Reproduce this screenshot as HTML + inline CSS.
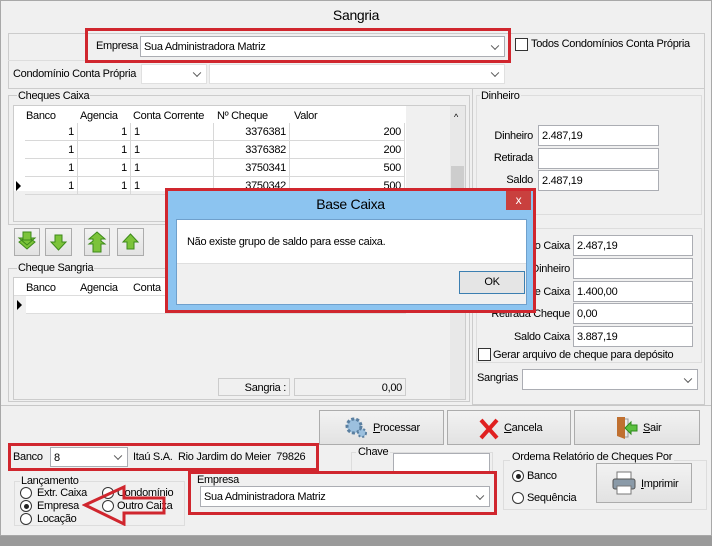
<!DOCTYPE html>
<html><head><meta charset="utf-8"><style>
*{box-sizing:border-box;margin:0;padding:0}
body{width:712px;height:546px;background:#9a9a9a;font-family:"Liberation Sans",sans-serif;font-size:11px;color:#000;position:relative;overflow:hidden;letter-spacing:-0.3px}
.a{position:absolute}
.win{left:0;top:0;width:712px;height:536px;background:#f0f0f0;border:1px solid #a8a8a8}
.inp{position:absolute;background:#fff;border:1px solid #abadb3;padding:4px 3px 0;white-space:nowrap}
.cmb::after{content:"";position:absolute;right:6px;top:50%;width:5px;height:5px;border-right:1.5px solid #555;border-bottom:1.5px solid #555;transform:translateY(-70%) rotate(45deg)}
.grp{position:absolute;border:1px solid #d5dfe5}
.lbl{position:absolute;white-space:nowrap}
.rl{position:absolute;white-space:nowrap;text-align:right;width:100px}
.red{position:absolute;border:3px solid #d0262e}
.btn{position:absolute;background:linear-gradient(#f2f2f2,#e2e2e2);border:1px solid #acacac}
.grid{position:absolute;background:#fff;border:1px solid #a0a0a0}
.cell{position:absolute;border-right:1px solid #d8d8d8;border-bottom:1px solid #d8d8d8;height:18px;padding:3px 3px 0;text-align:right}
.rad{position:absolute;width:12px;height:12px;border-radius:50%;border:1px solid #333;background:#fff}
.chk{position:absolute;width:13px;height:13px;border:1px solid #333;background:#fff}
u{text-decoration:underline}
</style></head><body>
<div class="a win"></div>
<div class="lbl" style="left:0;width:712px;text-align:center;top:7px;font-size:14px">Sangria</div>

<div class="grp" style="left:8px;top:33px;width:697px;height:56px;border-color:#ccc"></div>
<div class="a" style="left:8px;top:60px;width:497px;height:1px;background:#ddd"></div>
<div class="lbl" style="left:96px;top:40px">Empresa</div>
<div class="inp cmb" style="left:140px;top:36px;width:365px;height:21px">Sua Administradora Matriz</div>
<div class="red" style="left:85px;top:28px;width:426px;height:35px"></div>
<div class="chk" style="left:515px;top:38px"></div>
<div class="lbl" style="left:531px;top:38px">Todos Condomínios Conta Própria</div>
<div class="lbl" style="left:13px;top:68px">Condomínio Conta Própria</div>
<div class="inp cmb" style="left:141px;top:64px;width:66px;height:20px;border-color:#e0e0e0"></div>
<div class="inp cmb" style="left:209px;top:64px;width:296px;height:20px;border-color:#e0e0e0"></div>

<div class="grp" style="left:8px;top:95px;width:462px;height:130px;border-color:#ccc"></div>
<div class="lbl" style="left:17px;top:90px;background:#f0f0f0;padding:0 1px">Cheques Caixa</div>
<div class="grid" style="left:13px;top:105px;width:453px;height:117px;background:#f0f0f0;border-color:#ccc">
 <div class="a" style="left:0;top:0;width:392px;height:85px;background:#fff"></div>
 <div class="a" style="left:12px;top:4px">Banco</div>
 <div class="a" style="left:66px;top:4px">Agencia</div>
 <div class="a" style="left:119px;top:4px">Conta Corrente</div>
 <div class="a" style="left:203px;top:4px">Nº Cheque</div>
 <div class="a" style="left:280px;top:4px">Valor</div>
 <div class="a" style="left:436px;top:0;width:15px;height:115px;background:#e8e8e8"></div>
 <div class="a" style="left:437px;top:60px;width:13px;height:55px;background:#cdcdcd"></div>
 <div class="a" style="left:440px;top:6px;font-size:9px">^</div>
</div>
<div class="a" style="left:13px;top:123px">
 <div class="cell" style="left:12px;top:0;width:53px">1</div><div class="cell" style="left:65px;top:0;width:53px">1</div><div class="cell" style="left:118px;top:0;width:83px;text-align:left">1</div><div class="cell" style="left:201px;top:0;width:76px">3376381</div><div class="cell" style="left:277px;top:0;width:115px">200</div>
 <div class="cell" style="left:12px;top:18px;width:53px">1</div><div class="cell" style="left:65px;top:18px;width:53px">1</div><div class="cell" style="left:118px;top:18px;width:83px;text-align:left">1</div><div class="cell" style="left:201px;top:18px;width:76px">3376382</div><div class="cell" style="left:277px;top:18px;width:115px">200</div>
 <div class="cell" style="left:12px;top:36px;width:53px">1</div><div class="cell" style="left:65px;top:36px;width:53px">1</div><div class="cell" style="left:118px;top:36px;width:83px;text-align:left">1</div><div class="cell" style="left:201px;top:36px;width:76px">3750341</div><div class="cell" style="left:277px;top:36px;width:115px">500</div>
 <div class="cell" style="left:12px;top:54px;width:53px">1</div><div class="cell" style="left:65px;top:54px;width:53px">1</div><div class="cell" style="left:118px;top:54px;width:83px;text-align:left">1</div><div class="cell" style="left:201px;top:54px;width:76px">3750342</div><div class="cell" style="left:277px;top:54px;width:115px">500</div>
 <div class="a" style="left:3px;top:58px;width:0;height:0;border-left:5px solid #000;border-top:5px solid transparent;border-bottom:5px solid transparent"></div>
</div>

<div class="btn" style="left:14px;top:228px;width:26px;height:28px"><svg width="24" height="26"><path d="M8 3h8v6h4l-8 7-8-7h4z M8 11h8v-1l4 3-8 7-8-7 4-3z" fill="#7cc33a" stroke="#3d8a1a"/></svg></div>
<div class="btn" style="left:45px;top:228px;width:27px;height:28px"><svg width="25" height="26"><path d="M9 6h7v7h4l-7.5 8-7.5-8h4z" fill="#7cc33a" stroke="#3d8a1a"/></svg></div>
<div class="btn" style="left:84px;top:228px;width:26px;height:28px"><svg width="24" height="26"><path d="M12 3l8 7h-4v2l4 3h-4v8h-8v-8h-4l4-3v-2h-4z" fill="#7cc33a" stroke="#3d8a1a"/></svg></div>
<div class="btn" style="left:117px;top:228px;width:27px;height:28px"><svg width="25" height="26"><path d="M12.5 5l7.5 8h-4v7h-7v-7h-4z" fill="#7cc33a" stroke="#3d8a1a"/></svg></div>

<div class="grp" style="left:8px;top:268px;width:462px;height:134px;border-color:#ccc"></div>
<div class="lbl" style="left:17px;top:262px;background:#f0f0f0;padding:0 1px">Cheque Sangria</div>
<div class="grid" style="left:13px;top:277px;width:453px;height:123px;background:#f0f0f0;border-color:#ccc">
 <div class="a" style="left:0;top:0;width:392px;height:18px;background:#fff;border-bottom:1px solid #ddd"></div>
 <div class="a" style="left:12px;top:4px">Banco</div>
 <div class="a" style="left:66px;top:4px">Agencia</div>
 <div class="a" style="left:119px;top:4px">Conta</div>
 <div class="a" style="left:12px;top:18px;width:380px;height:18px;background:#fff;border-bottom:1px solid #ddd"></div>
 <div class="a" style="left:3px;top:22px;border-left:5px solid #000;border-top:5px solid transparent;border-bottom:5px solid transparent"></div>
 <div class="a" style="left:436px;top:0;width:15px;height:121px;background:#e8e8e8"></div>
 <div class="a" style="left:204px;top:100px;width:72px;height:18px;border:1px solid #ccc;text-align:right;padding:3px 3px 0">Sangria :</div>
 <div class="a" style="left:280px;top:100px;width:112px;height:18px;border:1px solid #ccc;text-align:right;padding:3px 3px 0">0,00</div>
</div>

<div class="grp" style="left:472px;top:88px;width:233px;height:317px;border-color:#ccc"></div>
<div class="grp" style="left:476px;top:95px;width:226px;height:120px;border-color:#ddd"></div>
<div class="lbl" style="left:480px;top:90px;background:#f0f0f0;padding:0 1px">Dinheiro</div>
<div class="rl" style="left:433px;top:130px">Dinheiro</div>
<div class="inp" style="left:538px;top:125px;width:121px;height:21px">2.487,19</div>
<div class="rl" style="left:433px;top:152px">Retirada</div>
<div class="inp" style="left:538px;top:148px;width:121px;height:21px"></div>
<div class="rl" style="left:433px;top:174px">Saldo</div>
<div class="inp" style="left:538px;top:170px;width:121px;height:21px">2.487,19</div>
<div class="grp" style="left:476px;top:228px;width:226px;height:135px;border-color:#ddd"></div>
<div class="rl" style="left:470px;top:240px">Saldo Caixa</div>
<div class="inp" style="left:573px;top:235px;width:120px;height:21px">2.487,19</div>
<div class="rl" style="left:470px;top:263px">Ret. Dinheiro</div>
<div class="inp" style="left:573px;top:258px;width:120px;height:21px"></div>
<div class="rl" style="left:470px;top:286px">Cheque Caixa</div>
<div class="inp" style="left:573px;top:281px;width:120px;height:21px">1.400,00</div>
<div class="rl" style="left:470px;top:308px">Retirada Cheque</div>
<div class="inp" style="left:573px;top:303px;width:120px;height:21px">0,00</div>
<div class="rl" style="left:470px;top:331px">Saldo Caixa</div>
<div class="inp" style="left:573px;top:326px;width:120px;height:21px">3.887,19</div>
<div class="chk" style="left:478px;top:348px"></div>
<div class="lbl" style="left:493px;top:349px">Gerar arquivo de cheque para depósito</div>
<div class="lbl" style="left:477px;top:372px">Sangrias</div>
<div class="inp cmb" style="left:522px;top:369px;width:176px;height:21px"></div>

<div class="a" style="left:1px;top:405px;width:710px;height:1px;background:#c8c8c8"></div>

<div class="btn" style="left:319px;top:410px;width:125px;height:35px"><svg class="a" style="left:24px;top:5px" width="26" height="24"><circle cx="10" cy="10" r="7" fill="#9cc0de" stroke="#5a7fa0" stroke-width="3" stroke-dasharray="3 2"/><circle cx="18" cy="17" r="4" fill="#9cc0de" stroke="#5a7fa0" stroke-width="2" stroke-dasharray="2 2"/></svg><span class="a" style="left:53px;top:11px"><u>P</u>rocessar</span></div>
<div class="btn" style="left:447px;top:410px;width:124px;height:35px"><svg class="a" style="left:30px;top:6px" width="22" height="24"><path d="M3 3L19 21M19 3L3 21" stroke="#e02020" stroke-width="4"/></svg><span class="a" style="left:56px;top:11px"><u>C</u>ancela</span></div>
<div class="btn" style="left:574px;top:410px;width:126px;height:35px"><svg class="a" style="left:38px;top:3px" width="26" height="28"><path d="M4 3h8v22l-8-3z" fill="#c07030"/><path d="M12 5h3v18h-3" fill="none" stroke="#999"/><path d="M12 14l6-6v3h6v6h-6v3z" fill="#5cc040" stroke="#2d8a1a"/></svg><span class="a" style="left:68px;top:11px"><u>S</u>air</span></div>

<div class="lbl" style="left:13px;top:451px">Banco</div>
<div class="inp cmb" style="left:50px;top:447px;width:78px;height:20px">8</div>
<div class="lbl" style="left:133px;top:451px">Itaú S.A.&nbsp; Rio Jardim do Meier&nbsp; 79826</div>
<div class="red" style="left:8px;top:443px;width:311px;height:28px"></div>

<div class="grp" style="left:351px;top:452px;width:142px;height:20px;border-color:#ddd;border-bottom:none"></div>
<div class="lbl" style="left:356px;top:446px;background:#f0f0f0;padding:0 2px">Chave</div>
<div class="inp" style="left:393px;top:453px;width:97px;height:20px"></div>

<div class="grp" style="left:14px;top:481px;width:171px;height:45px;border-color:#ddd"></div>
<div class="lbl" style="left:20px;top:475px;background:#f0f0f0;padding:0 1px">Lançamento</div>
<div class="rad" style="left:20px;top:487px"></div><div class="lbl" style="left:37px;top:487px">Extr. Caixa</div>
<div class="rad" style="left:20px;top:500px"></div><div class="a" style="left:24px;top:504px;width:5px;height:5px;border-radius:50%;background:#222"></div><div class="lbl" style="left:37px;top:500px">Empresa</div>
<div class="rad" style="left:20px;top:513px"></div><div class="lbl" style="left:37px;top:513px">Locação</div>
<div class="rad" style="left:102px;top:487px"></div><div class="lbl" style="left:117px;top:487px">Condomínio</div>
<div class="rad" style="left:102px;top:500px"></div><div class="lbl" style="left:117px;top:500px">Outro Caixa</div>
<svg class="a" style="left:82px;top:484px" width="86" height="42"><path d="M3 21L42 3v11h40v15H42v11z" fill="none" stroke="#d0262e" stroke-width="3"/></svg>

<div class="lbl" style="left:197px;top:474px">Empresa</div>
<div class="inp cmb" style="left:200px;top:486px;width:290px;height:21px">Sua Administradora Matriz</div>
<div class="red" style="left:188px;top:471px;width:309px;height:44px"></div>

<div class="grp" style="left:503px;top:460px;width:204px;height:50px;border-color:#ddd"></div>
<div class="lbl" style="left:510px;top:451px;background:#f0f0f0;padding:0 2px">Ordema Relatório de Cheques Por</div>
<div class="rad" style="left:512px;top:470px"></div><div class="a" style="left:516px;top:474px;width:5px;height:5px;border-radius:50%;background:#222"></div><div class="lbl" style="left:527px;top:470px">Banco</div>
<div class="rad" style="left:512px;top:492px"></div><div class="lbl" style="left:527px;top:492px">Sequência</div>
<div class="btn" style="left:596px;top:463px;width:96px;height:40px"><svg class="a" style="left:14px;top:6px" width="26" height="26"><rect x="6" y="2" width="14" height="8" fill="#fff" stroke="#777"/><rect x="2" y="9" width="22" height="10" rx="2" fill="#8a9aa8" stroke="#555"/><rect x="6" y="16" width="14" height="8" fill="#fff" stroke="#777"/></svg><span class="a" style="left:44px;top:14px"><u>I</u>mprimir</span></div>

<div class="a" style="left:165px;top:188px;width:371px;height:125px;border:3px solid #d0262e;background:#8cc4f0"></div>
<div class="lbl" style="left:168px;top:196px;width:365px;text-align:center;font-size:14px">Base Caixa</div>
<div class="a" style="left:506px;top:191px;width:25px;height:19px;background:#c9403e;color:#fff;text-align:center;font-size:12px;line-height:19px">x</div>
<div class="a" style="left:176px;top:219px;width:351px;height:86px;background:#f0f0f0;border:1px solid #6fa0cc"></div>
<div class="a" style="left:177px;top:220px;width:349px;height:44px;background:#fff;border-bottom:1px solid #dfdfdf"></div>
<div class="lbl" style="left:187px;top:236px">Não existe grupo de saldo para esse caixa.</div>
<div class="a" style="left:459px;top:271px;width:66px;height:23px;background:#e5e5e5;border:1px solid #3c7fb1;text-align:center;line-height:21px">OK</div>
</body></html>
